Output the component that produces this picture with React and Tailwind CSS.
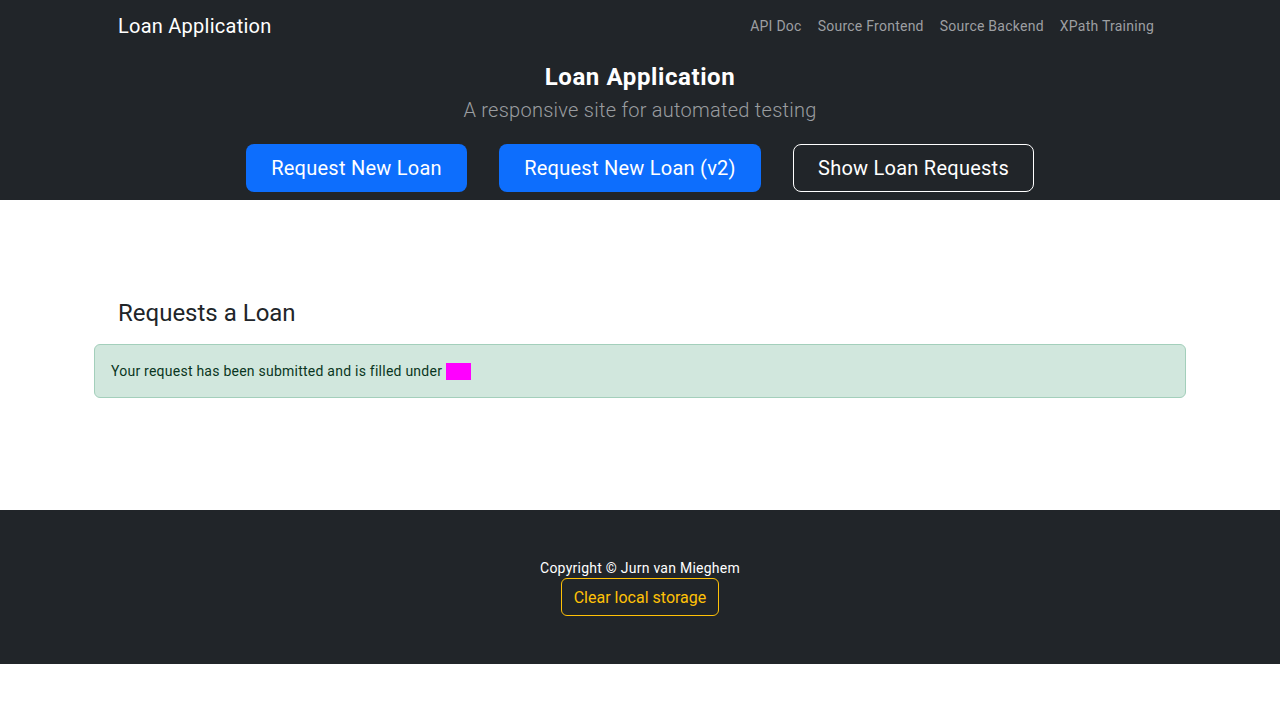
export default function App() {
  return (
    <div className="w-[1280px] bg-white" style={{ fontFamily: "Roboto, 'Liberation Sans', sans-serif" }}>
      <div className="bg-[#212529]">
        <nav className="flex items-center justify-between h-[52px] pl-[118px] pr-[126px]">
          <span className="text-[20px] text-white leading-none tracking-[0.25px]">Loan Application</span>
          <div className="flex items-center gap-4 text-[14px] text-[#9d9fa2] tracking-[0.25px]">
            <span>API Doc</span>
            <span>Source Frontend</span>
            <span>Source Backend</span>
            <span>XPath Training</span>
          </div>
        </nav>
        <div className="flex flex-col items-center pt-[10px] pb-[8px]">
          <h1 className="text-[24px] font-bold text-white leading-[30px] tracking-[0.6px]">Loan Application</h1>
          <p className="text-[20px] font-light text-[#9a9da0] leading-[30px] mt-[3px] tracking-[0.26px]">A responsive site for automated testing</p>
          <div className="flex gap-8 mt-[19px] tracking-[0.25px]">
            <button className="h-[48px] w-[221px] rounded-lg bg-[#0d6efd] text-white text-[20px]">Request New Loan</button>
            <button className="h-[48px] w-[262px] rounded-lg bg-[#0d6efd] text-white text-[20px]">Request New Loan (v2)</button>
            <button className="h-[48px] w-[241px] rounded-lg border border-white text-white text-[20px]">Show Loan Requests</button>
          </div>
        </div>
      </div>
      <main className="h-[310px] px-[94px] pt-[96px]">
        <h2 className="text-[24px] text-[#212529] leading-[34px] pl-[24px]">Requests a Loan</h2>
        <div className="mt-[14px] h-[54px] rounded-md border border-[#a3cfbb] bg-[#d1e7dd] text-[#0a3622] text-[14px] flex items-center px-[16px]">
          <span className="tracking-[0.24px]">Your request has been submitted and is filled under</span>
          <span className="inline-block w-[25px] h-[17px] bg-[#ff00ff] ml-[4px]"></span>
        </div>
      </main>
      <footer className="bg-[#212529] h-[154px] flex flex-col items-center pt-[49px]">
        <p className="text-[14px] text-white leading-[18px] tracking-[0.25px]">Copyright © Jurn van Mieghem</p>
        <button className="mt-[1px] h-[38px] w-[158px] rounded-md border border-[#ffc107] text-[#ffc107] text-[16px] pt-[2px]">Clear local storage</button>
      </footer>
      <div className="h-[56px] bg-white"></div>
    </div>
  );
}
